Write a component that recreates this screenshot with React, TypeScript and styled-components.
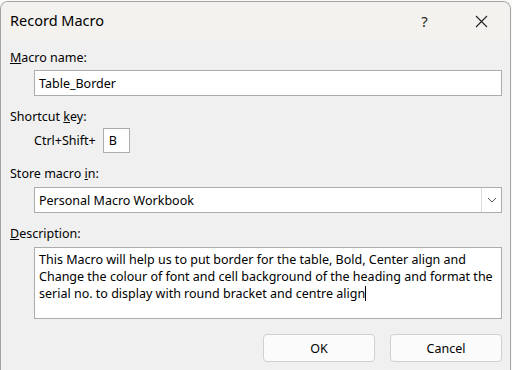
import React from "react";
import styled, { createGlobalStyle } from "styled-components";

const GlobalStyle = createGlobalStyle`
  html, body {
    margin: 0;
    padding: 0;
    background: #fafafa;
    overflow: hidden;
  }
  body {
    font-family: "Noto Sans", "Open Sans", sans-serif;
    color: #000;
  }
`;

const Window = styled.div`
  margin-top: 1px;
  width: 509px;
  min-height: 380px;
  border: 1px solid #a3a3a3;
  border-bottom: none;
  border-radius: 8px 8px 0 0;
  background: #f0f0f0;
  overflow: hidden;
`;

const TitleBar = styled.div`
  height: 38px;
  display: flex;
  align-items: center;
  background: #f3f2ef;
  padding-left: 9px;
`;

const Title = styled.div`
  flex: 1;
  font-size: 14.5px;
  margin-top: -2px;
`;

const TitleButton = styled.div`
  width: 57px;
  height: 38px;
  display: flex;
  align-items: center;
  justify-content: center;
  font-size: 15px;
  color: #222;
`;

const Body = styled.div`
  display: flex;
  flex-direction: column;
  padding: 10px 8px 0 9px;
  font-size: 12.5px;
`;

const Label = styled.div<{ $gap: number }>`
  height: 16px;
  line-height: 16px;
  margin-top: ${(p) => p.$gap}px;
`;

const Field = styled.div<{ $gap: number }>`
  margin-left: 24px;
  margin-top: ${(p) => p.$gap}px;
`;

const TextBox = styled.div`
  height: 24px;
  border: 1px solid #acacac;
  background: #fff;
  display: flex;
  align-items: center;
  padding-left: 4px;
`;

const ShortcutRow = styled.div`
  display: flex;
  align-items: center;
  gap: 7px;
`;

const KeyBox = styled.div`
  width: 20px;
  height: 23px;
  border: 1px solid #acacac;
  background: #fff;
  display: flex;
  align-items: center;
  padding-left: 5px;
`;

const Select = styled.div`
  height: 24px;
  border: 1px solid #acacac;
  background: #fff;
  display: flex;
  align-items: center;
`;

const SelectValue = styled.div`
  flex: 1;
  padding-left: 4px;
`;

const DropButton = styled.div`
  width: 19px;
  height: 24px;
  border-left: 1px solid #dcdcdc;
  display: flex;
  align-items: center;
  justify-content: center;
`;

const TextArea = styled.div`
  height: 64px;
  border: 1px solid #acacac;
  background: #fff;
  padding: 3px 4px;
  line-height: 17px;
  white-space: nowrap;
`;

const Caret = styled.span`
  display: inline-block;
  width: 1px;
  height: 15px;
  background: #000;
  vertical-align: -3px;
`;

const Buttons = styled.div`
  display: flex;
  justify-content: flex-end;
  gap: 15px;
  margin-top: 15px;
`;

const Button = styled.div`
  width: 110px;
  height: 26px;
  border: 1px solid #d0d0d0;
  border-radius: 4px;
  background: #fbfbfb;
  display: flex;
  align-items: center;
  justify-content: center;
`;

export default function App() {
  return (
    <>
      <GlobalStyle />
      <Window>
        <TitleBar>
          <Title>Record Macro</Title>
          <TitleButton>?</TitleButton>
          <TitleButton>
            <svg width="13" height="13" viewBox="0 0 13 13">
              <path d="M1 1 L12 12 M12 1 L1 12" stroke="#222" strokeWidth="1.1" fill="none" />
            </svg>
          </TitleButton>
        </TitleBar>
        <Body>
          <Label $gap={0}>
            <u>M</u>acro name:
          </Label>
          <Field $gap={4}>
            <TextBox>Table_Border</TextBox>
          </Field>
          <Label $gap={13}>
            Shortcut <u>k</u>ey:
          </Label>
          <Field $gap={3}>
            <ShortcutRow>
              <span>Ctrl+Shift+</span>
              <KeyBox>B</KeyBox>
            </ShortcutRow>
          </Field>
          <Label $gap={13}>
            Store macro <u>i</u>n:
          </Label>
          <Field $gap={5}>
            <Select>
              <SelectValue>Personal Macro Workbook</SelectValue>
              <DropButton>
                <svg width="10" height="6" viewBox="0 0 10 6">
                  <path d="M1 1 L5 5 L9 1" stroke="#555" strokeWidth="1" fill="none" />
                </svg>
              </DropButton>
            </Select>
          </Field>
          <Label $gap={13}>
            <u>D</u>escription:
          </Label>
          <Field $gap={5}>
            <TextArea>
              <div>This Macro will help us to put border for the table, Bold, Center align and</div>
              <div>Change the colour of font and cell background of the heading and format the</div>
              <div>
                serial no. to display with round bracket and centre align
                <Caret />
              </div>
            </TextArea>
          </Field>
          <Buttons>
            <Button>OK</Button>
            <Button>Cancel</Button>
          </Buttons>
        </Body>
      </Window>
    </>
  );
}
